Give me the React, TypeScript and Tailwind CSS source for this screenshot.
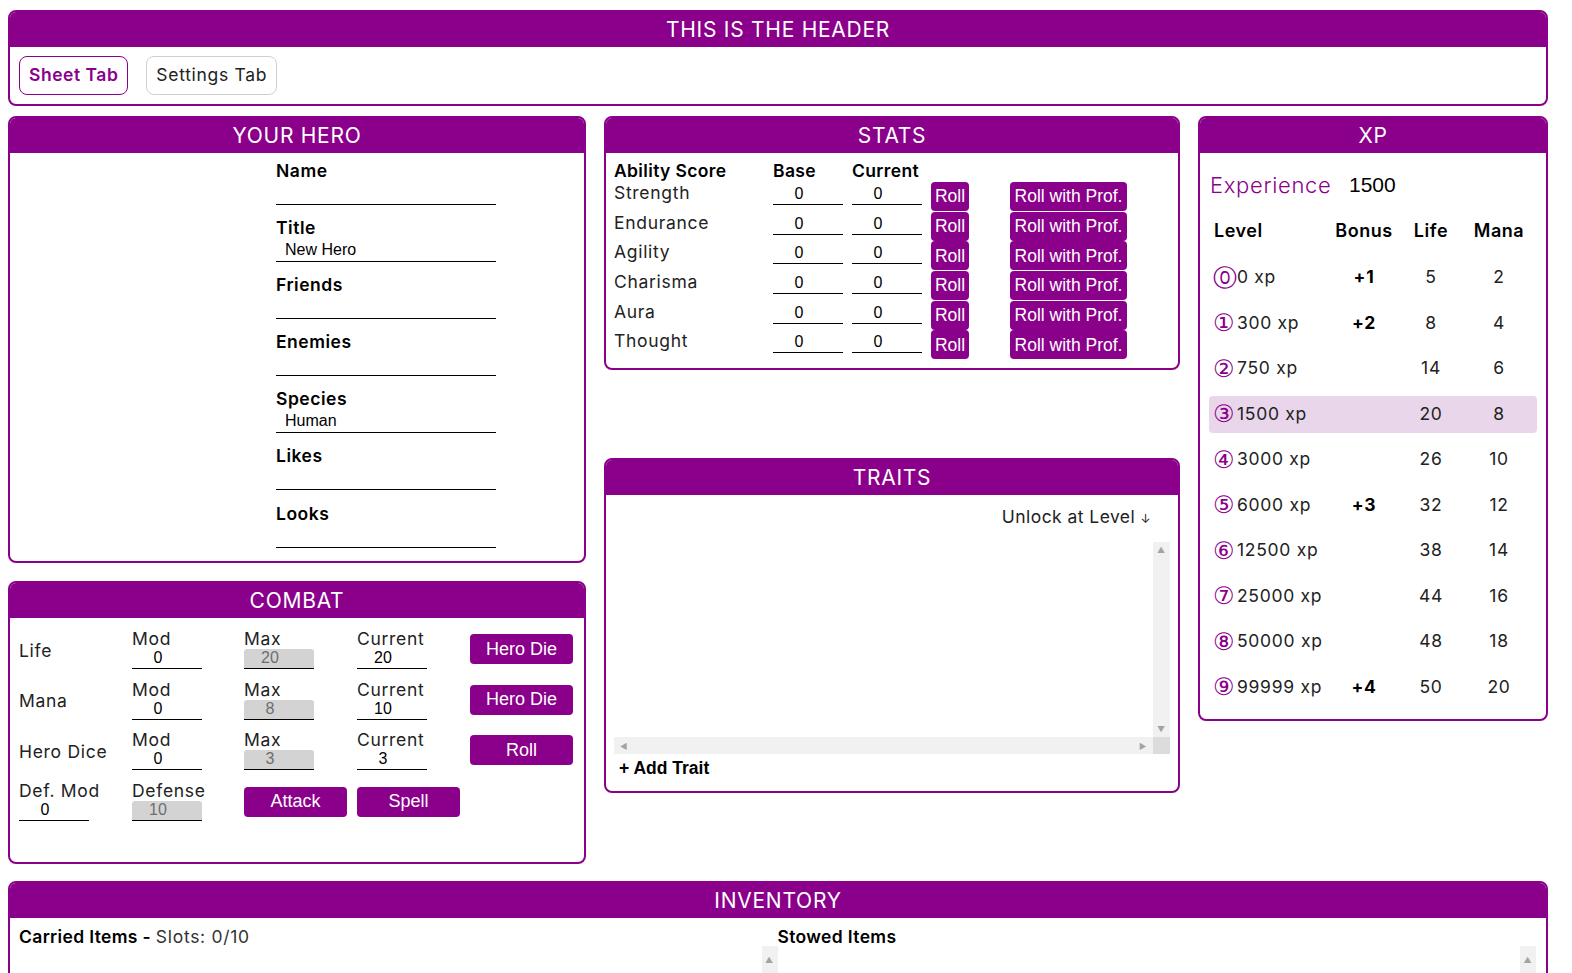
import React from "react";

const SANS = "font-['Inter','Noto_Sans',sans-serif]";
const ARIAL = "font-['Liberation_Sans',Arial,sans-serif]";

function Panel({
  title,
  className = "",
  bodyClass = "",
  children,
}: {
  title: string;
  className?: string;
  bodyClass?: string;
  children?: React.ReactNode;
}) {
  return (
    <div className={`border-2 border-[#8b008b] rounded-[8px] overflow-hidden bg-white flex flex-col ${className}`}>
      <div className="bg-[#8b008b] text-white text-center h-[35px] leading-[36px] text-[21px] tracking-[0.035em] shrink-0">
        {title}
      </div>
      <div className={`flex-1 ${bodyClass}`}>{children}</div>
    </div>
  );
}

function Val({ v, gray = false, h = "h-[20px]" }: { v: string; gray?: boolean; h?: string }) {
  return (
    <div
      className={`w-[70px] ${h} border-b border-black ${ARIAL} text-[16px] tracking-normal leading-[19px] flex items-end pb-[1px] ${
        gray ? "bg-[#d3d3d3] text-[#6e6e6e] rounded-t-[3px]" : "text-black"
      }`}
    >
      <span className="inline-block w-[52px] text-center">{v}</span>
    </div>
  );
}

function Btn({
  children,
  w,
  h = "h-[30px]",
  size = "text-[18px]",
}: {
  children: React.ReactNode;
  w: string;
  h?: string;
  size?: string;
}) {
  return (
    <div
      className={`${w} ${h} bg-[#8b008b] text-white rounded-[4px] ${ARIAL} ${size} tracking-normal flex items-center justify-center`}
    >
      {children}
    </div>
  );
}

function HeroField({ label, value = "" }: { label: string; value?: string }) {
  return (
    <div className="w-[220px]">
      <div className="h-[24px] leading-[24px] font-semibold tracking-[0.03em] text-black">{label}</div>
      <div className={`h-[22px] border-b border-black ${ARIAL} text-[16px] tracking-normal leading-[20px] pl-[9px] text-black`}>
        {value}
      </div>
    </div>
  );
}

const stats = ["Strength", "Endurance", "Agility", "Charisma", "Aura", "Thought"];

const xpRows: [string, string, string, string, string][] = [
  ["⓪", "0 xp", "+1", "5", "2"],
  ["①", "300 xp", "+2", "8", "4"],
  ["②", "750 xp", "", "14", "6"],
  ["③", "1500 xp", "", "20", "8"],
  ["④", "3000 xp", "", "26", "10"],
  ["⑤", "6000 xp", "+3", "32", "12"],
  ["⑥", "12500 xp", "", "38", "14"],
  ["⑦", "25000 xp", "", "44", "16"],
  ["⑧", "50000 xp", "", "48", "18"],
  ["⑨", "99999 xp", "+4", "50", "20"],
];

function CombatField({ label, v, gray = false }: { label: string; v: string; gray?: boolean }) {
  return (
    <div className="h-[40px] flex flex-col">
      <div className="h-[20px] leading-[20px] text-[#222] whitespace-nowrap">{label}</div>
      <Val v={v} gray={gray} />
    </div>
  );
}

function VScroll() {
  return (
    <div className="w-[17px] bg-[#f1f1f1] flex flex-col items-center justify-between text-[#a3a3a3] text-[8px] leading-none py-[4px]">
      <span>▲</span>
      <span>▼</span>
    </div>
  );
}

export default function App() {
  return (
    <div
      className={`h-[973px] overflow-hidden bg-white ${SANS} text-[17.5px] tracking-[0.04em] text-[#222] pl-[8px] pt-[10px]`}
    >
      <div className="w-[1540px]">
        {/* Header */}
        <Panel title="THIS IS THE HEADER" className="h-[96px]" bodyClass="p-[9px] flex gap-[18px]">
          <div className="h-[39px] px-[9px] border border-[#8b008b] rounded-[8px] text-[#8b008b] font-semibold tracking-[0.03em] flex items-center">
            Sheet Tab
          </div>
          <div className="h-[39px] px-[9px] border border-[#cfcfcf] rounded-[8px] text-[#222] flex items-center">
            Settings Tab
          </div>
        </Panel>

        <div className="flex gap-[18px] mt-[10px]">
          {/* Column 1 */}
          <div className="w-[578px] flex flex-col gap-[18px]">
            <Panel title="YOUR HERO" className="h-[447px]" bodyClass="pl-[266px] pt-[6px] flex flex-col gap-[11.1px]">
              <HeroField label="Name" />
              <HeroField label="Title" value="New Hero" />
              <HeroField label="Friends" />
              <HeroField label="Enemies" />
              <HeroField label="Species" value="Human" />
              <HeroField label="Likes" />
              <HeroField label="Looks" />
            </Panel>

            <Panel title="COMBAT" className="h-[283px]" bodyClass="pl-[9px] pt-[11px] flex flex-col gap-[10.5px]">
              {[
                ["Life", "20", "20", "Hero Die"],
                ["Mana", "8", "10", "Hero Die"],
                ["Hero Dice", "3", "3", "Roll"],
              ].map(([name, max, cur, btn]) => (
                <div key={name} className="grid grid-cols-[113px_112px_113px_113px_103px] h-[40px]">
                  <div className="leading-[22px] self-center mt-[3px] whitespace-nowrap">{name}</div>
                  <CombatField label="Mod" v="0" />
                  <CombatField label="Max" v={max} gray />
                  <CombatField label="Current" v={cur} />
                  <div className="self-center">
                    <Btn w="w-[103px]">{btn}</Btn>
                  </div>
                </div>
              ))}
              <div className="grid grid-cols-[113px_112px_113px_113px_103px] h-[40px]">
                <CombatField label="Def. Mod" v="0" />
                <CombatField label="Defense" v="10" gray />
                <div className="self-end mb-[4px]">
                  <Btn w="w-[103px]">Attack</Btn>
                </div>
                <div className="self-end mb-[4px]">
                  <Btn w="w-[103px]">Spell</Btn>
                </div>
              </div>
            </Panel>
          </div>

          {/* Column 2 */}
          <div className="w-[576px] flex flex-col">
            <Panel title="STATS" className="h-[254px]" bodyClass="pl-[8px] pt-[7px]">
              <div className="grid grid-cols-[159px_79px_79px_79px_117px] h-[22px] leading-[22px] font-semibold tracking-[0.02em] text-black">
                <div className="whitespace-nowrap">Ability Score</div>
                <div>Base</div>
                <div>Current</div>
                <div />
                <div />
              </div>
              {stats.map((s) => (
                <div key={s} className="grid grid-cols-[159px_79px_79px_79px_117px] h-[29.7px]">
                  <div className="leading-[22px]">{s}</div>
                  <Val v="0" h="h-[23px]" />
                  <Val v="0" h="h-[23px]" />
                  <Btn w="w-[38px]" h="h-[29px]" size="text-[17.5px]">
                    Roll
                  </Btn>
                  <Btn w="w-[117px]" h="h-[29px]" size="text-[17.5px]">
                    Roll with Prof.
                  </Btn>
                </div>
              ))}
            </Panel>

            <Panel title="TRAITS" className="h-[335px] mt-[88px]" bodyClass="px-[8px] pt-[11px] flex flex-col">
              <div className="text-right pr-[19px] leading-[22px] text-[#222] tracking-[0.025em]">
                Unlock at Level <span className="text-[12px]">↓</span>
              </div>
              <div className="mt-[12px] h-[212px] flex flex-col">
                <div className="flex flex-1">
                  <div className="flex-1 bg-white" />
                  <VScroll />
                </div>
                <div className="h-[17px] flex">
                  <div className="flex-1 bg-[#f1f1f1] flex items-center justify-between px-[6px] text-[#a3a3a3] text-[8px] leading-none">
                    <span>◀</span>
                    <span>▶</span>
                  </div>
                  <div className="w-[17px] bg-[#dcdcdc]" />
                </div>
              </div>
              <div className={`mt-[3px] pl-[5px] ${ARIAL} font-bold text-[17.5px] tracking-normal leading-[22px] text-black`}>
                + Add Trait
              </div>
            </Panel>
          </div>

          {/* Column 3 */}
          <div className="w-[350px]">
            <Panel title="XP" className="h-[605px]" bodyClass="px-[9px] pt-[16px]">
              <div className="h-[32px] flex items-center pl-[1px]">
                <span className="text-[22px] text-[#8b008b] font-light tracking-[0.03em] w-[139px]">Experience</span>
                <span className={`${ARIAL} text-[21px] tracking-normal text-black`}>1500</span>
              </div>
              <div className="mt-[10.5px] flex flex-col gap-[8.5px]">
                <div className="grid grid-cols-[119px_72px_62px_74px] h-[37px] mb-[2px] items-center text-[18px] font-semibold tracking-[0.03em] text-black">
                  <div className="pl-[5px]">Level</div>
                  <div className="text-center">Bonus</div>
                  <div className="text-center">Life</div>
                  <div className="text-center">Mana</div>
                </div>
                {xpRows.map(([c, x, b, l, m]) => (
                  <div
                    key={c}
                    className={`grid grid-cols-[119px_72px_62px_74px] h-[37px] items-center rounded-[4px] ${
                      c === "③" ? "bg-[#ead6ea]" : ""
                    }`}
                  >
                    <div className="pl-[4px] flex items-center whitespace-nowrap">
                      <span className="text-[#8b008b] text-[24px] tracking-normal font-['DejaVu_Sans',sans-serif] leading-none w-[24px]">
                        {c}
                      </span>
                      <span>{x}</span>
                    </div>
                    <div className="text-center font-bold text-black">{b}</div>
                    <div className="text-center">{l}</div>
                    <div className="text-center">{m}</div>
                  </div>
                ))}
              </div>
            </Panel>
          </div>
        </div>

        {/* Inventory */}
        <Panel title="INVENTORY" className="h-[240px] mt-[17px]" bodyClass="pl-[9px] pr-[10px] pt-[8px] grid grid-cols-2">
          <div className="flex flex-col">
            <div className="leading-[22px] text-black">
              <span className="font-semibold tracking-[0.02em]">Carried Items - </span>
              <span className="text-[#333]">Slots: 0/10</span>
            </div>
            <div className="flex h-[150px] mt-[-2px]">
              <div className="flex-1" />
              <div className="w-[16px] bg-[#f1f1f1] flex flex-col items-center text-[#a3a3a3] text-[8px] leading-none pt-[10px]">
                <span>▲</span>
              </div>
            </div>
          </div>
          <div className="flex flex-col">
            <div className="leading-[22px] text-black font-semibold tracking-[0.02em]">Stowed Items</div>
            <div className="flex h-[150px] mt-[-2px]">
              <div className="flex-1" />
              <div className="w-[16px] bg-[#f1f1f1] flex flex-col items-center text-[#a3a3a3] text-[8px] leading-none pt-[10px]">
                <span>▲</span>
              </div>
            </div>
          </div>
        </Panel>
      </div>
    </div>
  );
}
